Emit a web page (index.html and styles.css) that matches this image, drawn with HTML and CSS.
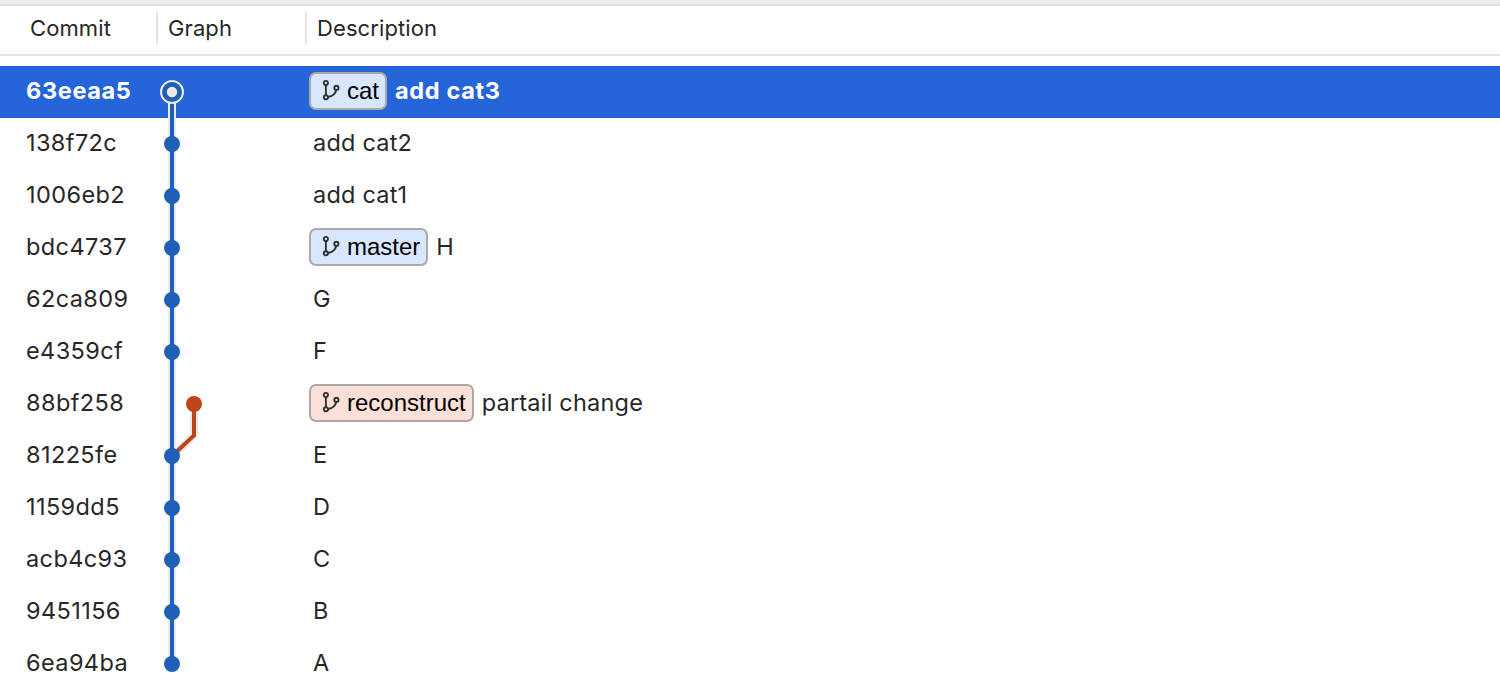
FILE: index.html
```html
<!DOCTYPE html>
<html lang="en">
<head>
<meta charset="utf-8">
<title>Commits</title>
<link rel="stylesheet" href="styles.css">
</head>
<body>
<svg class="defs" aria-hidden="true">
  <symbol id="branch" viewBox="0 0 18 22">
    <g fill="none" stroke="#333" stroke-width="1.9">
      <circle cx="3.900" cy="3" r="2.100"/><circle cx="3.900" cy="17.300" r="2.100"/><circle cx="14.400" cy="7.900" r="2.100"/>
      <path d="M3.900 5.100V15.200M14.200 10C13.500 13.500 10 16.300 6 17"/>
    </g>
  </symbol>
</svg>
<header class="head">
  <div class="th th-commit">Commit</div>
  <div class="th">Graph</div>
  <div class="th">Description</div>
</header>
<main class="log">
  <div class="row selected"><span class="hash">63eeaa5</span><span class="desc"><span class="tag"><svg class="icon"><use href="#branch"/></svg>cat</span><span class="msg">add cat3</span></span></div>
  <div class="row"><span class="hash">138f72c</span><span class="desc"><span class="msg">add cat2</span></span></div>
  <div class="row"><span class="hash">1006eb2</span><span class="desc"><span class="msg">add cat1</span></span></div>
  <div class="row"><span class="hash">bdc4737</span><span class="desc"><span class="tag"><svg class="icon"><use href="#branch"/></svg>master</span><span class="msg">H</span></span></div>
  <div class="row"><span class="hash">62ca809</span><span class="desc"><span class="msg">G</span></span></div>
  <div class="row"><span class="hash">e4359cf</span><span class="desc"><span class="msg">F</span></span></div>
  <div class="row"><span class="hash">88bf258</span><span class="desc"><span class="tag tag-red"><svg class="icon"><use href="#branch"/></svg>reconstruct</span><span class="msg">partail change</span></span></div>
  <div class="row"><span class="hash">81225fe</span><span class="desc"><span class="msg">E</span></span></div>
  <div class="row"><span class="hash">1159dd5</span><span class="desc"><span class="msg">D</span></span></div>
  <div class="row"><span class="hash">acb4c93</span><span class="desc"><span class="msg">C</span></span></div>
  <div class="row"><span class="hash">9451156</span><span class="desc"><span class="msg">B</span></span></div>
  <div class="row"><span class="hash">6ea94ba</span><span class="desc"><span class="msg">A</span></span></div>
  <svg class="graph" viewBox="0 0 60 624" fill="none">
    <path d="M22 26V598" stroke="#ebebeb" stroke-width="8"/>
    <path d="M44 338V369.500L22 390" stroke="#ebebeb" stroke-width="8"/>
    <path d="M44 338V369.500L22 390" stroke="#c0451b" stroke-width="4"/>
    <path d="M22 26V598" stroke="#205fb8" stroke-width="4"/>
    <circle cx="22" cy="26" r="11" fill="#205fb8" stroke="#ebebeb" stroke-width="2"/>
    <circle cx="22" cy="26" r="5.200" fill="#ebebeb"/>
    <g fill="#205fb8">
      <circle cx="22" cy="78" r="8"/><circle cx="22" cy="130" r="8"/><circle cx="22" cy="182" r="8"/>
      <circle cx="22" cy="234" r="8"/><circle cx="22" cy="286" r="8"/><circle cx="22" cy="390" r="8"/>
      <circle cx="22" cy="442" r="8"/><circle cx="22" cy="494" r="8"/><circle cx="22" cy="546" r="8"/>
      <circle cx="22" cy="598" r="8"/>
    </g>
    <circle cx="44" cy="338" r="8" fill="#c0451b"/>
  </svg>
</main>
</body>
</html>
```

FILE: styles.css
```css
* { box-sizing: border-box; }
body {
  margin: 0;
  height: 698px;
  overflow: hidden;
  background: #fff;
  color: #272727;
  font-family: Inter, sans-serif;
  font-size: 23.5px;
}
.defs { display: block; width: 0; height: 0; }
.head {
  display: grid;
  grid-template-columns: 156px 149px 1fr;
  height: 56px;
  padding-top: 8px;
  border-top: 4px solid #ececec;
  border-bottom: 2px solid #e3e3e3;
  box-shadow: inset 0 2px #e1e1e1;
  font-size: 22px;
  line-height: 32px;
}
.th { height: 32px; padding-left: 10px; border-left: 2px solid #e3e3e3; letter-spacing: 0.1px; }
.th-commit { padding-left: 30px; border-left: 0; }
.log { position: relative; margin-top: 10px; }
.row { display: grid; grid-template-columns: 283px 1fr; height: 52px; padding-left: 26px; line-height: 50px; white-space: nowrap; }
.hash { letter-spacing: 0.4px; }
.desc { display: flex; gap: 8px; }
.msg { letter-spacing: 0.2px; }
.msg:first-child { padding-left: 4px; }
.selected { background: #2565d9; color: #fff; font-weight: 700; }
.selected .hash, .selected .msg { letter-spacing: 0.65px; }
.tag {
  display: flex;
  align-items: center;
  height: 38px;
  margin-top: 6px;
  padding: 0 6px 0 11px;
  border: 2px solid #a9a9a9;
  border-radius: 7px;
  background: #d9e6ff;
  color: #000;
  font: 400 24px/34px "Liberation Sans", Arial, sans-serif;
}
.tag-red { background: #fcdfd6; }
.icon { width: 18px; height: 22px; margin-right: 7px; }
.graph { position: absolute; left: 150px; top: 0; width: 60px; height: 624px; }
```
